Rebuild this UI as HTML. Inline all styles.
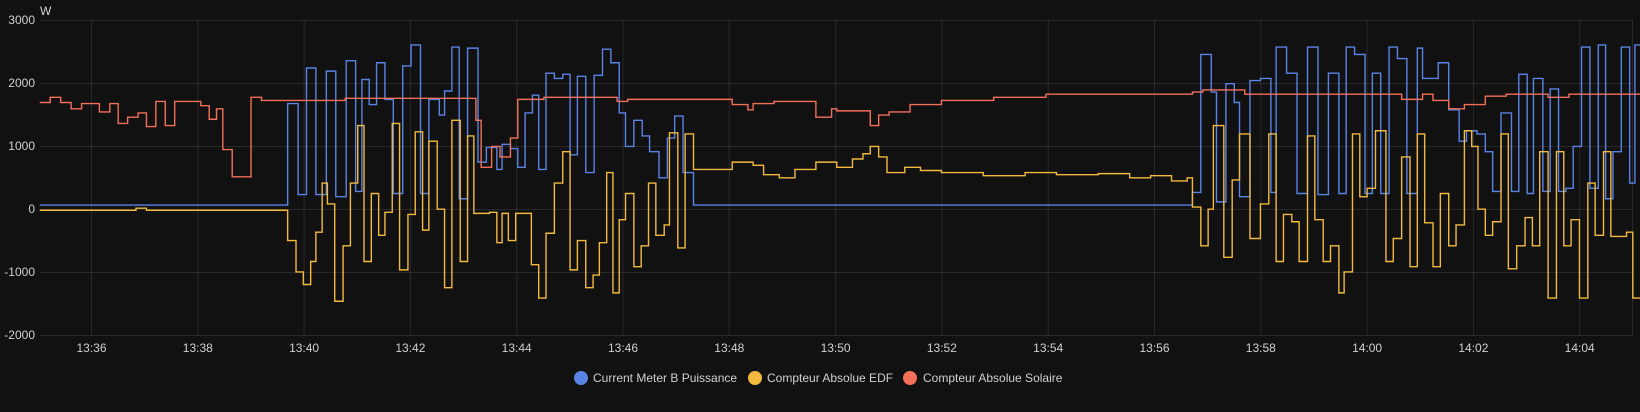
<!DOCTYPE html>
<html><head><meta charset="utf-8"><style>
body{margin:0;background:#111111;width:1640px;height:407px;overflow:hidden;font-family:"Liberation Sans",sans-serif;}
svg text{fill:#d0d0d0;font-family:"Liberation Sans",sans-serif;font-size:12px}
</style></head><body>
<svg width="1640" height="407" xmlns="http://www.w3.org/2000/svg">
<g stroke="rgba(204,204,220,0.13)" stroke-width="1">
<line x1="40" x2="1633" y1="20.5" y2="20.5"/><line x1="40" x2="1633" y1="83.5" y2="83.5"/><line x1="40" x2="1633" y1="146.5" y2="146.5"/><line x1="40" x2="1633" y1="209.5" y2="209.5"/><line x1="40" x2="1633" y1="272.5" y2="272.5"/><line x1="40" x2="1633" y1="335.5" y2="335.5"/>
<line y1="20" y2="335" x1="91.5" x2="91.5"/><line y1="20" y2="335" x1="197.8" x2="197.8"/><line y1="20" y2="335" x1="304.1" x2="304.1"/><line y1="20" y2="335" x1="410.4" x2="410.4"/><line y1="20" y2="335" x1="516.7" x2="516.7"/><line y1="20" y2="335" x1="623" x2="623"/><line y1="20" y2="335" x1="729.3" x2="729.3"/><line y1="20" y2="335" x1="835.6" x2="835.6"/><line y1="20" y2="335" x1="941.9" x2="941.9"/><line y1="20" y2="335" x1="1048.2" x2="1048.2"/><line y1="20" y2="335" x1="1154.5" x2="1154.5"/><line y1="20" y2="335" x1="1260.8" x2="1260.8"/><line y1="20" y2="335" x1="1367.1" x2="1367.1"/><line y1="20" y2="335" x1="1473.4" x2="1473.4"/><line y1="20" y2="335" x1="1579.7" x2="1579.7"/><line y1="20" y2="335" x1="1632.5" x2="1632.5"/>
</g>
<text x="40" y="15">W</text>
<g text-anchor="end"><text x="35" y="24">3000</text><text x="35" y="87">2000</text><text x="35" y="150">1000</text><text x="35" y="213">0</text><text x="35" y="276">-1000</text><text x="35" y="339">-2000</text></g>
<g text-anchor="middle"><text x="91.5" y="352">13:36</text><text x="197.8" y="352">13:38</text><text x="304.1" y="352">13:40</text><text x="410.4" y="352">13:42</text><text x="516.7" y="352">13:44</text><text x="623" y="352">13:46</text><text x="729.3" y="352">13:48</text><text x="835.6" y="352">13:50</text><text x="941.9" y="352">13:52</text><text x="1048.2" y="352">13:54</text><text x="1154.5" y="352">13:56</text><text x="1260.8" y="352">13:58</text><text x="1367.1" y="352">14:00</text><text x="1473.4" y="352">14:02</text><text x="1579.7" y="352">14:04</text></g>
<g transform="translate(0,0) scale(1.046)" fill="none" stroke-width="1.4" stroke-linejoin="miter">
<path vector-effect="non-scaling-stroke" stroke="#5a83e6" d="M38,196H275V99H285V186H293V65H302V186H312V68H321V188H331V58H340V183H346V76H353V100H360V60H368V95H376V185H385V63H393V43H402V185H410V95H420V110H425V87H432V45H439V190H447V46H457V155H465V141H475V162H480V138H488V142H495V160H502V108H509V91H515V162H522V70H530V75H538V71H545V148H552V73H560V165H568V72H576V47H584V60H592V108H598V140H606V115H614V130H621V145H630V170H638V132H645V111H653V165H663V196H1140V184H1148V52H1158V88H1163V193H1172V80H1180V98H1185V188H1195V77H1205V75H1215V184H1220V45H1230V70H1240V185H1250V45H1260V186H1270V70H1280V185H1287V45H1295V52H1305V185H1312V70H1320V185H1328V45H1336V56H1345V185H1355V46H1360V75H1375V60H1385V105H1395V135H1402V125H1412V128H1420V145H1427V183H1435V108H1445V183H1452V71H1460V185H1466V75H1475V183H1482V85H1490V183H1497V180H1504V140H1512V45H1520V180H1528V43H1535V190H1542V145H1550V45H1558V175H1563V43H1568"/>
<path vector-effect="non-scaling-stroke" stroke="#f2b93e" d="M38,201H130V199H140V201H275V230H283V260H290V272H297V250H302V222H308V175H313V195H320V288H328V235H335V175H342V120H348V250H355V185H362V225H368V203H375V118H382V258H390V205H397V126H404V220H410V135H418V200H425V275H432V115H440V250H447V130H453V204H468V203H475V232H480V204H486V230H493V204H508V253H515V285H522V223H530V175H538V145H545V258H552V230H560V275H567V263H573V232H580V165H586V280H592V210H598V185H606V255H613V235H620V175H627V225H635V215H640V127H648V237H655V128H663V162H700V155H720V158H730V167H745V170H760V162H780V155H800V160H815V152H825V147H832V140H840V150H848V165H865V160H880V163H900V165H940V168H980V165H1010V167H1050V166H1080V170H1100V168H1120V173H1135V170H1140V198H1148V235H1155V200H1160V120H1170V246H1178V172H1185V128H1195V228H1205V195H1213V128H1220V250H1227V205H1235V212H1242V250H1250V130H1257V210H1265V250H1272V235H1280V280H1285V260H1293V128H1300V188H1307V180H1315V125H1325V250H1332V228H1340V150H1348V255H1355V128H1362V213H1370V255H1377V185H1385V235H1392V215H1400V125H1407V140H1413V200H1420V225H1427V212H1435V128H1442V257H1450V235H1458V208H1465V235H1472V145H1480V285H1488V145H1495V235H1502V210H1510V285H1518V175H1525V225H1533V145H1540V226H1555V222H1561V285H1568"/>
<path vector-effect="non-scaling-stroke" stroke="#f2705a" d="M38,98H48V93H58V98H68V104H78V99H95V107H105V99H113V118H122V112H132V108H140V121H149V97H158V120H167V97H183V97H192V101H200V114H207V104H213V143H222V169H240V93H250V96H330V94H455V115H460V160H470V140H478V150H488V132H495V95H520V93H590V97H600V95H700V100H715V105H720V99H740V97H780V112H795V104H800V106H832V120H840V110H850V107H870V100H900V96H950V93H1000V90H1140V88H1150V86H1190V90H1340V95H1360V90H1370V96H1385V104H1400V100H1420V92H1440V90H1480V93H1500V90H1568"/>
</g>
<g><circle cx="581" cy="378" r="7" fill="#5a83e6"/><text x="593" y="382">Current Meter B Puissance</text>
<circle cx="755" cy="378" r="7" fill="#f2b93e"/><text x="767" y="382">Compteur Absolue EDF</text>
<circle cx="910" cy="378" r="7" fill="#f2705a"/><text x="923" y="382">Compteur Absolue Solaire</text></g>
</svg>
</body></html>
